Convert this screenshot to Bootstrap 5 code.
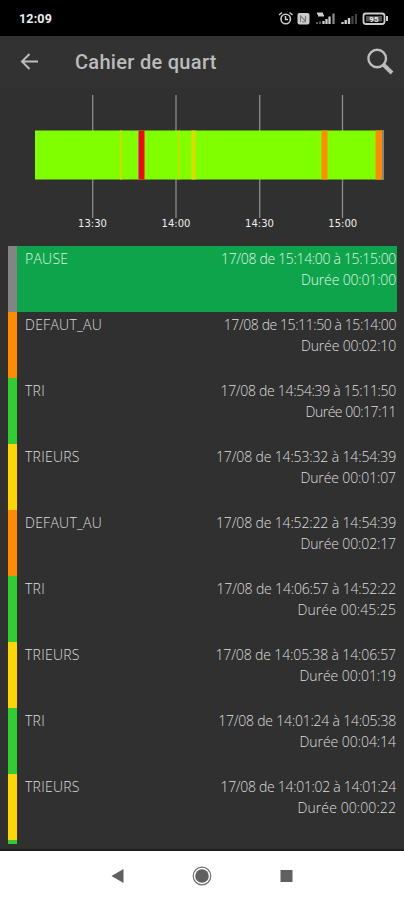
<!DOCTYPE html>
<html lang="fr">
<head>
<meta charset="utf-8">
<meta name="viewport" content="width=device-width, initial-scale=1">
<title>Cahier de quart</title>
<link href="https://cdn.jsdelivr.net/npm/bootstrap@5.3.0/dist/css/bootstrap.min.css" rel="stylesheet">
<style>
body{background:#303030;color:#dedede;font-family:"Open Sans","Noto Sans",sans-serif;height:900px;overflow:hidden}
.status{height:36px;background:#000;padding:0 16px 0 19px;font:700 12.5px/38px Roboto,sans-serif;letter-spacing:.15px;color:#eee}
.status span{position:relative;top:1px}
.status svg{display:block}
.appbar{height:52px;background:#323232;padding:0 10px 0 20px}
.appbar h1{font:500 20px/52px Roboto,sans-serif;color:#bcbcbc;margin:0 0 0 35px;letter-spacing:.3px}
.chart{height:157.5px}
.log{height:598.5px;margin:0 7px 0 8px;overflow:hidden}
.entry{height:66px;border-left:9px solid var(--tone);padding:2px 1px 0 8px;font-size:14px;font-weight:300;line-height:21px}
.entry .kind{letter-spacing:.25px}
.entry .when{letter-spacing:var(--ls)}
.entry .dur{letter-spacing:var(--ld)}
.gray{--tone:#848484}.orange{--tone:#ff8c00}.green{--tone:#32cd32}.gold{--tone:#ffd700}
.current{background:#0da44b;color:#e2f4e5}
.sliver{height:5px;width:9px;background:#32cd32}
.navkeys{height:51px;background:#fff;border-top:2px solid #1d1d1d;flex:none}
</style>
<script src="https://cdn.jsdelivr.net/npm/bootstrap@5.3.0/dist/js/bootstrap.bundle.min.js"></script>
</head>
<body class="d-flex flex-column">
<header class="flex-shrink-0">
<div class="status d-flex justify-content-between align-items-center">
<span>12:09</span>
<svg width="112" height="20" viewBox="276 8 112 20" fill="none" stroke="#ccc">
<circle cx="285.7" cy="19" r="4.7" stroke-width="1.6"/><path d="M285.500 16v3.500h2.500M279 15l3-2.500M292.500 15l-3-2.500" stroke-width="1.500"/>
<rect x="297.500" y="13" width="12" height="11.500" rx="2" fill="#ccc" stroke="none"/><path d="M300.500 22v-6l5 5v-5M302 22l4-.5" stroke="#777" stroke-width="1.100"/>
<path d="M317 13.500h6M318 15.500h6" stroke-width="2"/><path d="M317 24v-2M320 24v-2.500" stroke="#777" stroke-width="1.500"/><path d="M323.500 24v-3M326.500 24v-5M329.500 24v-7.500" stroke-width="2.300"/><path d="M333.500 24V13.500" stroke="#888" stroke-width="2.300"/>
<path d="M342.500 24v-2M345.700 24v-4M349 24v-6" stroke-width="2.400"/><path d="M352.500 24v-8M356 24V14" stroke="#444" stroke-width="2.200"/>
<rect x="363.500" y="13.500" width="21" height="10.500" rx="2.500" stroke-width="1.800"/><path d="M387 16v5" stroke-width="2"/>
<rect x="366" y="16" width="16" height="5.500" fill="#555" stroke="none"/>
<text x="374" y="21.800" font-family="Roboto" font-size="8" font-weight="700" text-anchor="middle" fill="#eee" stroke="none">95</text>
</svg>
</div>
<nav class="appbar d-flex align-items-center">
<svg width="20" height="20" viewBox="0 0 20 20" fill="none" stroke="#bcbcbc" stroke-width="2"><path d="M18 9.500H3M9.500 2L2 9.500L9.500 17"/></svg>
<h1>Cahier de quart</h1>
<svg class="ms-auto" width="28" height="28" viewBox="0 0 28 28" fill="none" stroke="#bcbcbc"><circle cx="11.200" cy="10.500" r="8.800" stroke-width="2.400"/><path d="M17.500 16.800L26 25" stroke-width="4"/></svg>
</nav>
</header>
<section class="chart flex-shrink-0">
<svg class="d-block" width="404" height="157" viewBox="0 88 404 157">
<path d="M92.700 95V218M176 95V218M259.700 95V218M342.500 95V218" stroke="#8c8c8c" stroke-width="1.300"/>
<rect x="35" y="130.500" width="349" height="49" fill="#80ff00"/>
<path fill="#d5d800" d="M120 130.500h2v49h-2zM178.500 130.500h1.500v49h-1.500z"/>
<path fill="#e4d800" d="M191.500 130.500h4v49h-4z"/>
<path fill="#848484" d="M138 130.500h1.500v49H138zM382 130.500h2v49h-2z"/>
<path fill="#f90410" d="M139 130.500h5.500v49H139z"/>
<path fill="#ff8c00" d="M321.500 130.500h6v49h-6zM375.500 130.500h6.500v49h-6.500z"/>
<g fill="#eee" font-family="DejaVu Sans, sans-serif" font-size="10" text-anchor="middle"><text x="92.500" y="227">13:30</text><text x="176" y="227">14:00</text><text x="259.500" y="227">14:30</text><text x="342.700" y="227">15:00</text></g>
</svg>
</section>
<main class="log flex-shrink-0 mb-1">
<div class="entry gray current d-flex justify-content-between" style="--ls:-.32px;--ld:-.16px"><span class="kind">PAUSE</span><div class="text-end"><div class="when">17/08 de 15:14:00 à 15:15:00</div><div class="dur">Durée 00:01:00</div></div></div>
<div class="entry orange d-flex justify-content-between" style="--ls:-.42px;--ld:-.16px"><span class="kind">DEFAUT_AU</span><div class="text-end"><div class="when">17/08 de 15:11:50 à 15:14:00</div><div class="dur">Durée 00:02:10</div></div></div>
<div class="entry green d-flex justify-content-between" style="--ls:-.3px;--ld:-.48px"><span class="kind">TRI</span><div class="text-end"><div class="when">17/08 de 14:54:39 à 15:11:50</div><div class="dur">Durée 00:17:11</div></div></div>
<div class="entry gold d-flex justify-content-between" style="--ls:-.14px;--ld:-.12px"><span class="kind">TRIEURS</span><div class="text-end"><div class="when">17/08 de 14:53:32 à 14:54:39</div><div class="dur">Durée 00:01:07</div></div></div>
<div class="entry orange d-flex justify-content-between" style="--ls:-.14px;--ld:-.12px"><span class="kind">DEFAUT_AU</span><div class="text-end"><div class="when">17/08 de 14:52:22 à 14:54:39</div><div class="dur">Durée 00:02:17</div></div></div>
<div class="entry green d-flex justify-content-between" style="--ls:-.16px;--ld:.09px"><span class="kind">TRI</span><div class="text-end"><div class="when">17/08 de 14:06:57 à 14:52:22</div><div class="dur">Durée 00:45:25</div></div></div>
<div class="entry gold d-flex justify-content-between" style="--ls:-.12px;--ld:-.05px"><span class="kind">TRIEURS</span><div class="text-end"><div class="when">17/08 de 14:05:38 à 14:06:57</div><div class="dur">Durée 00:01:19</div></div></div>
<div class="entry green d-flex justify-content-between" style="--ls:-.22px;--ld:-.05px"><span class="kind">TRI</span><div class="text-end"><div class="when">17/08 de 14:01:24 à 14:05:38</div><div class="dur">Durée 00:04:14</div></div></div>
<div class="entry gold d-flex justify-content-between" style="--ls:-.3px;--ld:.09px"><span class="kind">TRIEURS</span><div class="text-end"><div class="when">17/08 de 14:01:02 à 14:01:24</div><div class="dur">Durée 00:00:22</div></div></div>
<div class="sliver"></div>
</main>
<footer class="navkeys mt-auto">
<svg class="d-block" width="404" height="49" viewBox="0 851 404 49" fill="#606060"><path d="M111.500 876l12-7v14z"/><circle cx="202" cy="876" r="6.800"/><circle cx="202" cy="876" r="8.800" fill="none" stroke="#707070" stroke-width="1.200"/><rect x="280.500" y="870" width="12" height="12"/></svg>
</footer>
</body>
</html>
